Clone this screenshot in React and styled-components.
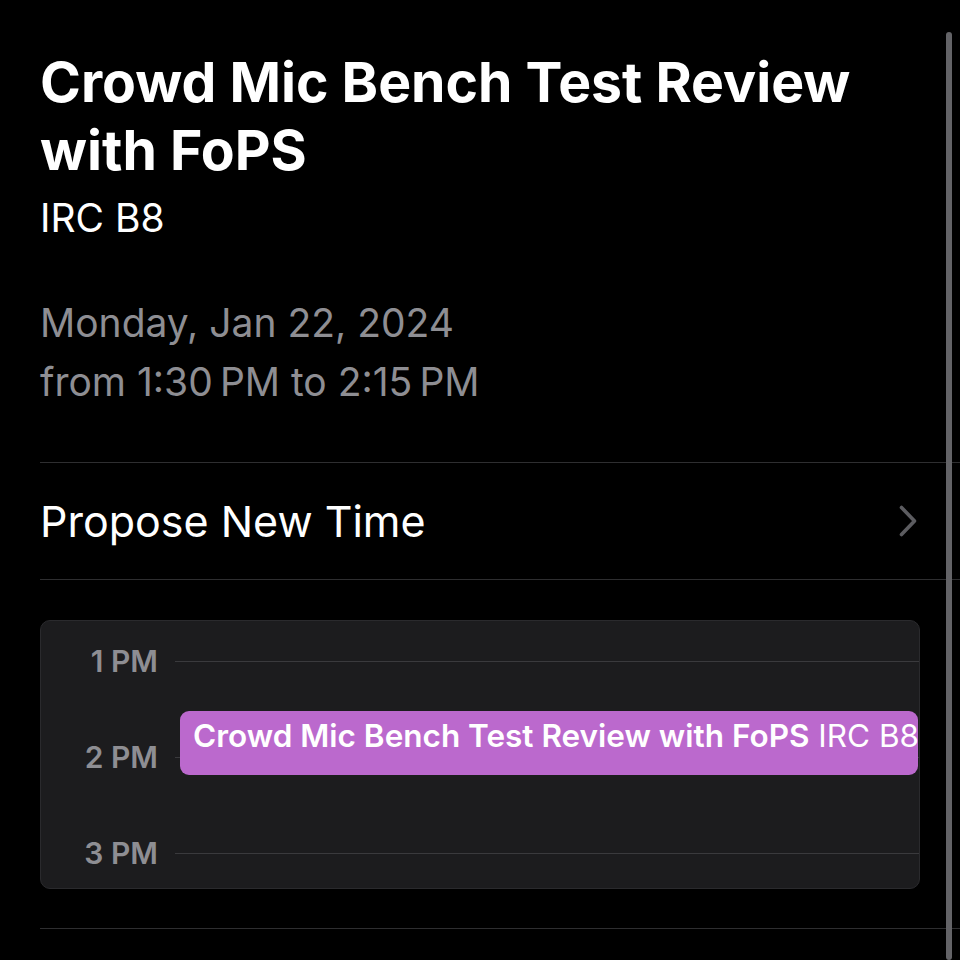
import styled, { createGlobalStyle } from 'styled-components';

const Global = createGlobalStyle`
  html, body { margin: 0; padding: 0; background: #000; }
  body { font-family: Inter, "Noto Sans", sans-serif; color: #fff; }
`;

const Page = styled.div`
  position: relative;
  width: 960px;
  height: 960px;
  overflow: hidden;
  background: #000;
  padding-left: 40px;
  box-sizing: border-box;
`;

const ScrollThumb = styled.div`
  position: absolute;
  right: 8px;
  top: 32px;
  bottom: 0;
  width: 6px;
  border-radius: 3px;
  background: #636367;
`;

const Header = styled.div`
  padding-top: 48px;
  padding-bottom: 51px;
`;

const Title = styled.h1`
  margin: 0;
  font-size: 55.3px;
  font-weight: 700;
  line-height: 68px;
  width: 860px;
`;

const Location = styled.div`
  font-size: 39px;
  line-height: 48px;
  margin-top: 10px;
`;

const When = styled.div`
  margin-top: 51px;
  color: #8e8e93;
  font-size: 39px;
  line-height: 59px;
`;

const Row = styled.div`
  display: flex;
  align-items: center;
  justify-content: space-between;
  height: 118px;
  box-sizing: border-box;
  padding-right: 43px;
  border-top: 1px solid #2e2e30;
  border-bottom: 1px solid #2e2e30;
  font-size: 43px;
`;

const Chevron = () => (
  <svg width="18" height="32" viewBox="0 0 18 32" fill="none">
    <path d="M2.5 2.5 L15.5 16 L2.5 29.5" stroke="#5c5c60" strokeWidth="3.6" strokeLinecap="round" strokeLinejoin="round" />
  </svg>
);

const Day = styled.div`
  position: relative;
  margin: 40px 40px 0 0;
  height: 269px;
  background: #1c1c1e;
  border: 1px solid #2a2a2d;
  border-radius: 10px;
  display: flex;
  flex-direction: column;
  padding-top: 20px;
  box-sizing: border-box;
  overflow: hidden;
`;

const Hour = styled.div`
  display: flex;
  align-items: center;
  flex-shrink: 0;
  height: 40px;
  margin-bottom: 56px;
`;

const HourLabel = styled.span`
  width: 117px;
  text-align: right;
  color: #8e8e93;
  font-size: 30px;
  font-weight: 600;
`;

const HourLine = styled.span`
  flex: 1;
  height: 1px;
  margin-left: 17px;
  background: #3a3a3d;
`;

const Event = styled.div`
  position: absolute;
  left: 139px;
  right: 1px;
  top: 90px;
  height: 64px;
  background: #bb69cd;
  border-radius: 9px;
  padding: 6px 0 0 13px;
  box-sizing: border-box;
  font-size: 31.5px;
  line-height: 38px;
  white-space: nowrap;
  overflow: hidden;
`;

const EventTitle = styled.b`
  font-weight: 600;
`;

const EventPlace = styled.span`
  font-weight: 400;
`;

const Rule = styled.div`
  margin-top: 39px;
  border-top: 1px solid #2e2e30;
`;

export default function App() {
  return (
    <>
      <Global />
      <Page>
        <Header>
          <Title>Crowd Mic Bench Test Review with FoPS</Title>
          <Location>IRC B8</Location>
          <When>
            Monday, Jan 22, 2024
            <br />
            from 1:30{'\u202F'}PM to 2:15{'\u202F'}PM
          </When>
        </Header>
        <Row>
          Propose New Time
          <Chevron />
        </Row>
        <Day>
          {['1 PM', '2 PM', '3 PM'].map((h) => (
            <Hour key={h}>
              <HourLabel>{h}</HourLabel>
              <HourLine />
            </Hour>
          ))}
          <Event>
            <EventTitle>Crowd Mic Bench Test Review with FoPS</EventTitle> <EventPlace>IRC B8</EventPlace>
          </Event>
        </Day>
        <Rule />
        <ScrollThumb />
      </Page>
    </>
  );
}
